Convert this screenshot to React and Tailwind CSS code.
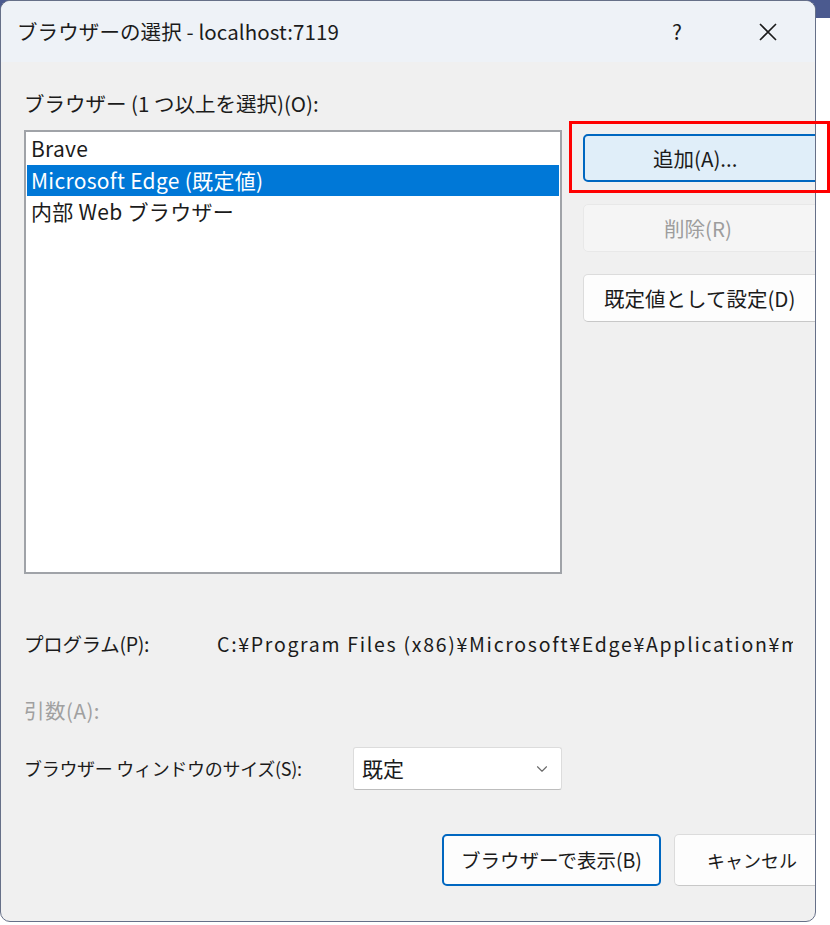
import { ChevronDown } from "lucide-react";

const font = "font-['Noto_Sans_CJK_JP','Noto_Sans',sans-serif]";

export default function App() {
  const browsers = [
    { name: "Brave", selected: false },
    { name: "Microsoft Edge (既定値)", selected: true },
    { name: "内部 Web ブラウザー", selected: false },
  ];

  return (
    <div
      className={`w-[830px] h-[925px] bg-[linear-gradient(to_bottom,#4b5a8f_0,#4b5a8f_18px,#ffffff_18px)] relative ${font} text-[#1b1b1b]`}
    >
      {/* dialog window */}
      <div className="w-[816px] h-[922px] rounded-[10px] border border-[#667088] overflow-hidden flex flex-col bg-[#f0f0f0]">
        {/* title bar */}
        <div className="h-[61px] shrink-0 bg-[#eef2f7] flex items-center pl-[16px]">
          <span className="text-[20.5px] tracking-[0.1px]">ブラウザーの選択 - localhost:7119</span>
          <span className="ml-auto w-[20px] text-center text-[21px] mr-[71px]">?</span>
          <svg width="20" height="20" viewBox="0 0 20 20" className="mr-[37px]">
            <path d="M2 2 L18 18 M18 2 L2 18" stroke="#1b1b1b" strokeWidth="1.6" />
          </svg>
        </div>

        {/* body */}
        <div className="flex-1 flex flex-col pl-[23px]">
          <div className="mt-[29px] h-[24px] leading-[24px] text-[20.5px]">
            ブラウザー (1 つ以上を選択)(O):
          </div>

          <div className="mt-[15px] flex">
            {/* list box */}
            <div className="w-[538px] h-[444px] bg-white border-2 border-[#a0a3a8] pt-[1px] px-[1px] shrink-0">
              {browsers.map((b) => (
                <div
                  key={b.name}
                  className={`h-[31.5px] flex items-center pl-[4px] text-[21px] tracking-[0.3px] ${
                    b.selected ? "bg-[#0078d7] text-white" : ""
                  }`}
                >
                  {b.name}
                </div>
              ))}
            </div>

            {/* side buttons */}
            <div className="ml-[21px] pt-[4px] flex flex-col gap-[22px] shrink-0">
              <button className="w-[250px] h-[48px] rounded-[5px] bg-[#e0eef9] border-2 border-[#0067c0] text-[20.5px] flex items-center pl-[68px]">
                追加(A)...
              </button>
              <button className="w-[250px] h-[48px] rounded-[5px] bg-[#f5f5f5] border border-[#e8e8e8] text-[20.5px] text-[#9d9d9d] flex items-center pl-[80px]">
                削除(R)
              </button>
              <button className="w-[250px] h-[48px] rounded-[5px] bg-[#fdfdfd] border border-[#dcdcdc] border-b-[#c8c8c8] text-[20.5px] flex items-center pl-[20px] whitespace-nowrap">
                既定値として設定(D)
              </button>
            </div>
          </div>

          {/* program row */}
          <div className="mt-[57px] h-[26px] flex items-center text-[19.5px]">
            <span className="w-[193px] shrink-0 tracking-[-0.3px]">プログラム(P):</span>
            <span className="w-[576px] overflow-hidden whitespace-nowrap tracking-[1.7px]">
              C:¥Program Files (x86)¥Microsoft¥Edge¥Application¥msedge.exe
            </span>
          </div>

          <div className="mt-[40px] h-[26px] flex items-center text-[20.5px] text-[#a0a0a0] tracking-[0.5px]">
            引数(A):
          </div>

          {/* window size */}
          <div className="mt-[24px] flex items-center">
            <span className="w-[329px] shrink-0 text-[18px] tracking-[-0.3px]">
              ブラウザー ウィンドウのサイズ(S):
            </span>
            <div className="w-[209px] h-[43px] bg-white border border-[#dcdcdc] border-b-[#bdbdbd] rounded-[3px] flex items-center pl-[8px] pr-[10px] text-[21px]">
              既定
              <ChevronDown className="ml-auto text-[#6a6a6a]" size={18} strokeWidth={1.5} />
            </div>
          </div>

          {/* bottom buttons */}
          <div className="mt-[44px] flex pl-[418px] gap-[13px]">
            <button className="w-[219px] h-[52px] shrink-0 rounded-[5px] bg-[#fdfdfd] border-2 border-[#0067c0] text-[19.5px] flex items-center justify-center whitespace-nowrap">
              ブラウザーで表示(B)
            </button>
            <button className="w-[160px] h-[52px] shrink-0 rounded-[5px] bg-[#fdfdfd] border border-[#dcdcdc] border-b-[#c8c8c8] text-[18px] flex items-center pl-[32px] whitespace-nowrap">
              キャンセル
            </button>
          </div>
        </div>
      </div>

      {/* red highlight annotation */}
      <div className="absolute left-[569px] top-[121px] w-[261px] h-[72px] border-[3px] border-[#ff0000]" />
    </div>
  );
}
